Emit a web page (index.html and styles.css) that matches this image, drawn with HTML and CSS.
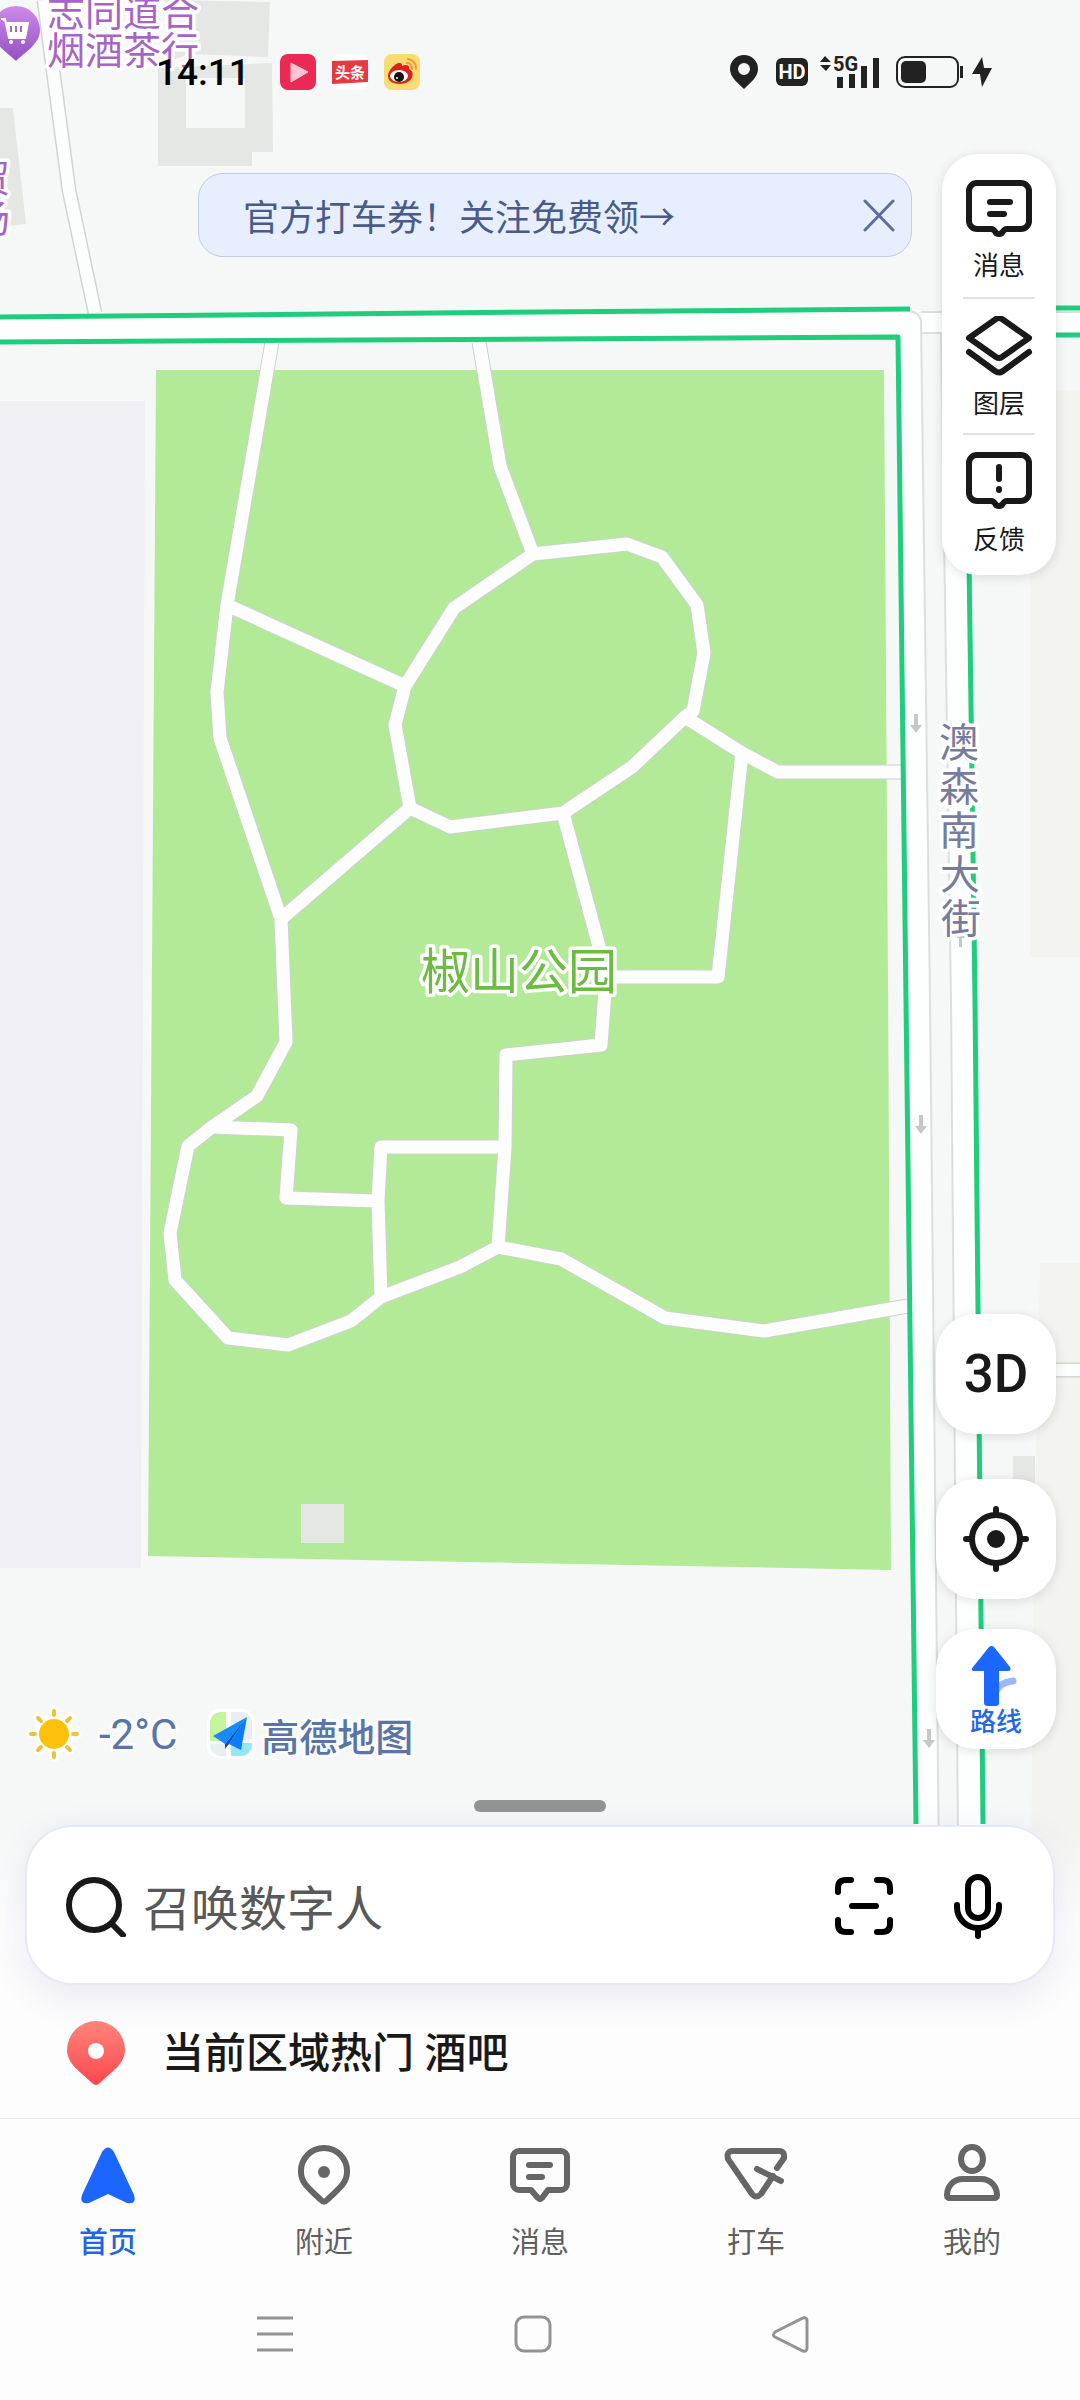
FILE: index.html
```html
<!DOCTYPE html>
<html lang="zh-CN">
<head>
    <meta charset="UTF-8">
    <meta name="viewport" content="width=device-width, initial-scale=1.0">
    <title>高德地图</title>
    <link rel="stylesheet" href="styles.css">
</head>
<body>
    <div class="app">
        <!-- 地图底图 -->
        <svg class="map" viewBox="0 0 1080 1960" aria-hidden="true">
            <defs>
                <linearGradient id="poi" x1="0" y1="0" x2="0" y2="1">
                    <stop offset="0" stop-color="#cf8ae8"/>
                    <stop offset="1" stop-color="#9350c4"/>
                </linearGradient>
                <g id="lanes">
                    <path d="M44 0L53 70L69 190L95 313"/>
                    <path d="M1040 1370H1080"/>
                </g>
                <g id="trails">
                    <path d="M272 342L227 605L217 692L220 738L281 919L286 1042L257 1096L212 1127L188 1146L170 1233L175 1280L228 1338L288 1345L351 1321L381 1297L460 1267L498 1247L561 1259L665 1318L764 1331L908 1306"/>
                    <path d="M479 342L500 466L533 554L627 544L662 557L697 605L704 653L693 711L685 717L632 767L563 813L450 827L410 808L395 725L405 686L454 608L533 554"/>
                    <path d="M227 605L405 686M410 808L281 919"/>
                    <path d="M685 717L742 753L778 772H902M742 753L718 977H604"/>
                    <path d="M563 813L600 950L606 977L601 1045L506 1055L505 1147L498 1247"/>
                    <path d="M212 1127L291 1130L286 1198L378 1201M505 1147H381L378 1201L381 1297"/>
                </g>
            </defs>
            <path class="land-mauve" d="M0 401H145L141 1568H0z"/>
            <path class="land-beige" d="M1030 390H1080V957H1030zM1040 1263H1080V1960H1030L1034 1560z"/>
            <path class="building" d="M165 0L270 2L268 57L190 54L165 62zM158 68L272 63L273 152H252V166H158zM0 108H13L26 224L0 227zM1013 1456H1035V1490H1013z"/>
            <path class="hole" d="M186 78H245V128H186z"/>
            <path class="park" d="M156 370H884L888 980L891 1570L148 1556z"/>
            <path class="building" d="M301 1504H344V1543H301z"/>

            <!-- 小路 -->
            <use href="#lanes" class="lane-case"/>
            <use href="#lanes" class="lane"/>
            <use href="#trails" class="trail-case"/>
            <use href="#trails" class="trail"/>

            <!-- 主干道 -->
            <path class="road" d="M0 315L910 310Q920 312 921 322L930 1000L940 1960H918L898 337L0 342z"/>
            <path class="road" d="M921 312H1080V333H966L983 1960H959L951 1000L941 333H921z"/>
            <path class="road-edge" d="M907 311Q920 311 921 322L930 1000L940 1960M921 312H1080M921 333H941L951 1000L959 1960"/>
            <path class="traffic" d="M0 317L540 312L910 309M0 342L898 337L906 1000L916 1824M1050 308H1080M1050 335H1080M966 340L975 1000L983 1824"/>
            <path class="arrow" d="M914 714h4v11h4l-6 8l-6-8h4zM919 1115h4v11h4l-6 8l-6-8h4zM927 1729h4v11h4l-6 8l-6-8h4zM957 935h8v3h-3v9h-3v-9h-2z"/>

            <!-- 地名 -->
            <path fill="url(#poi)" d="M16 6a24 24 0 0 1 24 24c0 14-15 22-24 31c-9-9-24-17-24-31a24 24 0 0 1 24-24z"/>
            <path class="cart" d="M1 19h4l4 19h16l3-15H6"/>
            <path class="cart-lines" d="M11 26v6M16 26v6M21 26v6"/>
            <circle cx="11" cy="42" r="2" fill="#fff"/>
            <circle cx="23" cy="42" r="2" fill="#fff"/>
            <g class="shop-name">
                <text x="47" y="26">志同道合</text>
                <text x="47" y="64">烟酒茶行</text>
                <text x="-28" y="192">贸</text>
                <text x="-28" y="232">场</text>
            </g>
            <text class="park-name" x="519" y="989">椒山公园</text>
            <g class="street-name">
                <text x="959" y="757">澳</text>
                <text x="959" y="801">森</text>
                <text x="959" y="845">南</text>
                <text x="960" y="889">大</text>
                <text x="961" y="933">街</text>
            </g>
        </svg>

        <header class="status">
            <div class="status-left">
                <time class="clock">14:11</time>
                <svg width="36" height="36" viewBox="0 0 36 36">
                    <rect width="36" height="36" rx="8" fill="#ea2a54"/>
                    <path d="M11 9l17 9l-17 10z" fill="#fbc6d0" stroke="#fbc6d0" stroke-linejoin="round"/>
                </svg>
                <svg width="36" height="36" viewBox="0 0 36 36">
                    <rect width="36" height="36" rx="8" fill="#fff"/>
                    <path d="M0 7L36 6V28L0 30z" fill="#e43b41"/>
                    <text x="18" y="24" class="toutiao">头条</text>
                </svg>
                <svg width="36" height="36" viewBox="0 0 36 36">
                    <rect width="36" height="36" rx="8" fill="#fbdc72"/>
                    <path d="M4 22c0-6 8-14 12-13c2 0 2 2 2 3c4-2 8-1 7 3c7 3 4 15-9 15c-7 0-12-3-12-8z" fill="#dd2219"/>
                    <ellipse cx="15" cy="22" rx="9" ry="6" fill="#fff"/>
                    <circle cx="15" cy="23" r="5" fill="#111"/>
                    <circle cx="13" cy="24" r="1" fill="#fff"/>
                    <path d="M24 5a9 9 0 0 1 8 10M23 9a5 5 0 0 1 5 6" fill="none" stroke="#f0993a" stroke-width="2" stroke-linecap="round"/>
                </svg>
            </div>
            <div class="status-right">
                <svg class="gap-pin" width="28" height="36" viewBox="0 0 28 36">
                    <path fill-rule="evenodd" d="M14 1a14 14 0 0 1 14 14c0 8-7 13-14 20C7 28 0 23 0 15A14 14 0 0 1 14 1zm0 8a6 6 0 1 0 0 12a6 6 0 0 0 0-12z"/>
                </svg>
                <svg class="gap-hd" width="32" height="28" viewBox="0 0 32 28">
                    <rect width="32" height="28" rx="6"/>
                    <text x="16" y="21" class="hd">HD</text>
                </svg>
                <svg class="gap-net" width="60" height="34" viewBox="0 0 60 34">
                    <path d="M0 7l5-6l6 6zM0 10h11l-5 6z"/>
                    <text x="13" y="16" class="net">5G</text>
                    <path d="M17 22h6v11h-6zM29 19h6v14h-6zM41 11h6v22h-6zM53 3h6v30h-6z"/>
                </svg>
                <svg width="68" height="32" viewBox="0 0 68 32">
                    <rect x="1" y="1" width="61" height="30" rx="8" fill="none" stroke="#222" stroke-width="2"/>
                    <rect x="5" y="5" width="25" height="22" rx="5"/>
                    <path d="M64 10h3v12h-3z"/>
                </svg>
                <svg width="20" height="32" viewBox="0 0 20 32">
                    <path d="M10 1L0 18h8l2 13L20 12h-8z"/>
                </svg>
            </div>
        </header>

        <main class="overlay">
            <div class="overlay-top">
                <div class="banner">
                    <a class="banner-link" href="#">官方打车券！关注免费领→</a>
                    <button class="banner-close" aria-label="关闭">
                        <svg width="34" height="34" viewBox="0 0 34 34"><path d="M3 3l28 29M31 3L3 32"/></svg>
                    </button>
                </div>
                <div class="tools">
                    <button class="tool">
                        <svg width="68" height="62" viewBox="0 0 68 62">
                            <path d="M12 5h44a8 8 0 0 1 8 8v30a8 8 0 0 1-8 8h-14q-3 0-5 4q-3 2-6 0q-2-4-5-4h-14a8 8 0 0 1-8-8v-30a8 8 0 0 1 8-8zM25 24h20M25 36h14"/>
                        </svg>
                        消息
                    </button>
                    <button class="tool">
                        <svg width="68" height="62" viewBox="0 0 68 62">
                            <path d="M4 22L31 3q3-2 6 0L64 22L37 41q-3 2-6 0zM4 36L30 55q4 3 8 0L64 36"/>
                        </svg>
                        图层
                    </button>
                    <button class="tool">
                        <svg width="68" height="62" viewBox="0 0 68 62">
                            <path d="M12 3h44a8 8 0 0 1 8 8v30a8 8 0 0 1-8 8h-14q-3 0-5 4q-3 2-6 0q-2-4-5-4h-14a8 8 0 0 1-8-8v-30a8 8 0 0 1 8-8zM34 15v12M34 37v1"/>
                        </svg>
                        反馈
                    </button>
                </div>
            </div>

            <div class="overlay-bottom">
                <div class="weather">
                    <svg class="sun" width="56" height="56" viewBox="0 0 56 56">
                        <g stroke-linecap="round">
                            <path d="M28 5v4M28 47v4M5 28h4M47 28h4M12 12l3 3M41 41l3 3M12 44l3-3M41 15l3-3" stroke="#fff" stroke-width="10"/>
                            <circle cx="28" cy="28" r="20" fill="#fff"/>
                            <path d="M28 5v4M28 47v4M5 28h4M47 28h4M12 12l3 3M41 41l3 3M12 44l3-3M41 15l3-3" stroke="#efc235" stroke-width="4"/>
                        </g>
                        <circle cx="28" cy="28" r="15" fill="#ffc107"/>
                    </svg>
                    <span class="temp">-2°C</span>
                    <svg class="logo" width="48" height="50" viewBox="0 0 48 50">
                        <rect width="48" height="50" rx="13" fill="#fff"/>
                        <path d="M14 3h5v29H3V14A11 11 0 0 1 14 3z" fill="#c3f59c"/>
                        <path d="M24 3h10a11 11 0 0 1 11 11v17H24zM3 35h16v12h-5A11 11 0 0 1 3 36z" fill="#e9eff0"/>
                        <path d="M24 34h21v2a11 11 0 0 1-11 11H24z" fill="#94e6fb"/>
                        <path d="M40 8L6 27l12 8z" fill="#148bff"/>
                        <path d="M40 8L22 35l12 6z" fill="#0c7cff"/>
                        <path d="M18 35v5l4-5L40 8z" fill="#0752c0"/>
                    </svg>
                    <span class="brand">高德地图</span>
                </div>
                <div class="controls">
                    <button class="control control-3d">3D</button>
                    <button class="control control-locate" aria-label="定位">
                        <svg width="68" height="68" viewBox="0 0 68 68" fill="none" stroke="#191919" stroke-width="6" stroke-linecap="round">
                            <circle cx="34" cy="34" r="24"/>
                            <circle cx="34" cy="34" r="9" fill="#191919" stroke="none"/>
                            <path d="M34 4v6M34 58v6M4 34h6M58 34h6"/>
                        </svg>
                    </button>
                    <button class="control control-route">
                        <svg width="52" height="60" viewBox="0 0 52 60">
                            <path d="M24 50c3-10 9-14 19-15" fill="none" stroke="#9db8f8" stroke-width="7" stroke-linecap="round"/>
                            <path d="M19 1q3-2 5 0L40 21q2 4-2 4h-9v32q0 3-3 3h-8q-4 0-4-3V25H5q-5 0-2-4z" fill="#1a68ff"/>
                        </svg>
                        路线
                    </button>
                </div>
            </div>
        </main>

        <section class="sheet">
            <div class="handle"></div>
            <form class="search">
                <label for="keyword">
                    <svg width="64" height="64" viewBox="0 0 64 64" fill="none" stroke="#191919" stroke-width="6" stroke-linecap="round">
                        <circle cx="29" cy="32" r="25"/>
                        <path d="M48 52l10 10"/>
                    </svg>
                </label>
                <input id="keyword" class="search-input" type="text" placeholder="召唤数字人" aria-label="搜索">
                <button class="search-button" type="button" aria-label="扫一扫">
                    <svg width="60" height="68" viewBox="0 0 60 68">
                        <path d="M17 9h-5q-8 0-8 8v4M43 9h5q8 0 8 8v4M17 61h-5q-8 0-8-8v-4M43 61h5q8 0 8-8v-4M18 35h24"/>
                    </svg>
                </button>
                <button class="search-button" type="button" aria-label="语音">
                    <svg width="60" height="68" viewBox="0 0 60 68">
                        <rect x="20" y="6" width="20" height="41" rx="10"/>
                        <path d="M9 34v2a21 21 0 0 0 42 0v-2M30 57v8"/>
                    </svg>
                </button>
            </form>
            <a class="hot" href="#">
                <svg width="60" height="66" viewBox="0 0 60 66">
                    <defs>
                        <linearGradient id="hot" x1="0" y1="0" x2="0" y2="1">
                            <stop offset="0" stop-color="#ff857b"/>
                            <stop offset="1" stop-color="#ff474f"/>
                        </linearGradient>
                    </defs>
                    <path fill="url(#hot)" d="M30 1a29 29 0 0 1 29 29c0 14-14 22-25 33q-4 4-8 0C15 52 1 44 1 30A29 29 0 0 1 30 1z"/>
                    <circle cx="30" cy="31" r="8" fill="#fff"/>
                </svg>
                <span class="hot-text">当前区域热门 酒吧</span>
            </a>
        </section>

        <nav class="tabs">
            <a class="tab tab-active" href="#">
                <svg width="64" height="64" viewBox="0 0 64 64">
                    <path d="M26 11q6-9 12 0L58 54q3 10-7 8L32 53L13 62q-10 2-7-8z" fill="#1a66ff" stroke="none"/>
                </svg>
                首页
            </a>
            <a class="tab" href="#">
                <svg width="64" height="64" viewBox="0 0 64 64">
                    <path d="M32 7a23 23 0 0 1 23 24c0 12-10 18-20 28q-3 3-6 0C19 49 9 43 9 31A23 23 0 0 1 32 7z"/>
                    <circle cx="32" cy="31" r="6" fill="#666" stroke="none"/>
                </svg>
                附近
            </a>
            <a class="tab" href="#">
                <svg width="64" height="64" viewBox="0 0 64 64">
                    <path d="M11 10h42a6 6 0 0 1 6 6v27a6 6 0 0 1-6 6H40l-6 8q-2 2-4 0l-7-8H11a6 6 0 0 1-6-6V16a6 6 0 0 1 6-6zM21 24h21M21 36h13"/>
                </svg>
                消息
            </a>
            <a class="tab" href="#">
                <svg width="64" height="64" viewBox="0 0 64 64">
                    <path d="M53 27l7-10q1-7-5-7H9q-7 0-5 8l24 35q4 5 9 0l12-18M33 28l24 12"/>
                </svg>
                打车
            </a>
            <a class="tab" href="#">
                <svg width="64" height="64" viewBox="0 0 64 64">
                    <ellipse cx="32" cy="18" rx="11" ry="12"/>
                    <path d="M23 38h18c10 0 16 8 16 16q0 3-3 3H10q-3 0-3-3c0-8 6-16 16-16z"/>
                </svg>
                我的
            </a>
        </nav>

        <div class="system">
            <button class="system-button" aria-label="最近任务">
                <svg width="38" height="38" viewBox="0 0 38 38"><path d="M1 3h36M1 19h36M1 35h36"/></svg>
            </button>
            <button class="system-button" aria-label="主屏幕">
                <svg width="38" height="38" viewBox="0 0 38 38"><rect x="2" y="2" width="34" height="34" rx="8"/></svg>
            </button>
            <button class="system-button" aria-label="返回">
                <svg width="38" height="38" viewBox="0 0 38 38"><path d="M3 17L31 3q4-1 4 3v27q0 4-4 3L3 22q-3-2 0-5z"/></svg>
            </button>
        </div>
    </div>
</body>
</html>
```
FILE: styles.css
```css
* {
    box-sizing: border-box;
}

body {
    margin: 0;
    font-family: Roboto, "Noto Sans CJK SC", sans-serif;
    color: #191919;
    background: #fdfdfd;
}

button {
    padding: 0;
    border: none;
    background: none;
    color: inherit;
    font-family: inherit;
    cursor: pointer;
}

a {
    color: inherit;
    text-decoration: none;
}

svg {
    display: block;
    flex: none;
}

.app {
    position: relative;
    display: flex;
    flex-direction: column;
    min-height: 100vh;
    overflow: hidden;
}

/* 地图 */
.map {
    position: absolute;
    top: 0;
    left: 0;
    width: 100%;
    height: auto;
    background: #f5f8f7;
}

.land-mauve { fill: #f1eff6; }
.land-beige { fill: #f3f4f0; }
.building { fill: #e5e7e4; }
.hole { fill: #f5f8f7; }
.park { fill: #b2ea98; }
.road { fill: #fdfefe; }
.arrow { fill: #c6c8c8; }

.lane,
.lane-case,
.trail,
.trail-case,
.road-edge,
.traffic {
    fill: none;
    stroke-linejoin: round;
}

.lane { stroke: #fcfdfd; stroke-width: 12; }
.lane-case { stroke: #d2d4d4; stroke-width: 15; }
.trail { stroke: #fcfdfc; stroke-width: 13; }
.trail-case { stroke: #cdd2cd; stroke-width: 15; }
.road-edge { stroke: #dcdfdf; stroke-width: 2; }
.traffic { stroke: #1fcd7c; stroke-width: 5; }

.cart {
    fill: #fff;
    stroke: #fff;
    stroke-width: 2;
}

.cart-lines {
    stroke: #a765cf;
    stroke-width: 2;
}

.shop-name,
.park-name,
.street-name {
    paint-order: stroke;
    stroke: #fff;
    stroke-width: 7;
    stroke-linejoin: round;
}

.shop-name {
    font-size: 38px;
    fill: #a664c9;
}

.park-name {
    font-size: 49px;
    text-anchor: middle;
    fill: #6cbb42;
}

.street-name {
    font-size: 40px;
    text-anchor: middle;
    fill: #777b9c;
}

/* 状态栏 */
.status {
    position: relative;
    display: flex;
    justify-content: space-between;
    align-items: center;
    height: 144px;
    padding: 0 88px 0 156px;
}

.status-left,
.status-right {
    display: flex;
    align-items: center;
}

.status-left {
    gap: 16px;
}

.status-right {
    gap: 8px;
    fill: #222;
}

.clock {
    margin-right: 14px;
    font-size: 37px;
    font-weight: 500;
    color: #000;
}

.gap-pin { margin-right: 10px; }
.gap-hd { margin-right: 4px; }
.gap-net { margin-right: 8px; }

.toutiao {
    font-size: 15px;
    font-weight: 700;
    text-anchor: middle;
    fill: #fff;
}

.hd {
    font-size: 20px;
    font-weight: 700;
    text-anchor: middle;
    fill: #fff;
}

.net {
    font-size: 20px;
    font-weight: 700;
}

/* 地图上的控件 */
.overlay {
    position: relative;
    flex: 1;
    display: flex;
    flex-direction: column;
    justify-content: space-between;
    padding: 10px 24px 29px;
}

.overlay-top {
    display: flex;
    justify-content: space-between;
    align-items: flex-start;
    gap: 30px;
    padding-left: 174px;
}

.banner {
    flex: 1;
    display: flex;
    justify-content: space-between;
    align-items: center;
    height: 84px;
    margin-top: 19px;
    padding: 0 15px 0 44px;
    border: 1px solid #c3cce4;
    border-radius: 25px;
    background: #e7effe;
}

.banner-link {
    font-size: 36px;
    color: #4a5b88;
}

.banner-close {
    fill: none;
    stroke: #5d6e9b;
    stroke-width: 3;
    stroke-linecap: round;
}

.tools {
    width: 114px;
    padding: 7px 21px 6px;
    border-radius: 36px;
    background: #fff;
    box-shadow: 0 2px 12px rgba(0, 0, 0, 0.12);
}

.tool {
    display: flex;
    flex-direction: column;
    align-items: center;
    gap: 8px;
    width: 100%;
    height: 136px;
    padding-top: 17px;
    font-size: 26px;
    line-height: 36px;
}

.tool + .tool {
    border-top: 2px solid #e2e2e2;
}

.tool svg {
    fill: none;
    stroke: #191919;
    stroke-width: 6;
    stroke-linecap: round;
    stroke-linejoin: round;
}

.overlay-bottom {
    display: flex;
    justify-content: space-between;
    align-items: flex-end;
}

.weather {
    display: flex;
    align-items: center;
    height: 50px;
    padding-left: 2px;
    color: #5a74a6;
}

.temp {
    margin: 0 30px 0 17px;
    font-size: 42px;
}

.brand {
    margin-left: 6px;
    font-size: 38px;
    font-weight: 500;
}

.temp,
.brand {
    -webkit-text-stroke: 6px #fafbfb;
    paint-order: stroke;
}

.controls {
    display: flex;
    flex-direction: column;
    padding-bottom: 10px;
}

.control {
    display: flex;
    flex-direction: column;
    justify-content: center;
    align-items: center;
    width: 120px;
    height: 120px;
    border-radius: 40px;
    background: #fff;
    box-shadow: 0 2px 12px rgba(0, 0, 0, 0.12);
}

.control-3d {
    margin-bottom: 45px;
    font-size: 53px;
    font-weight: 500;
}

.control-locate {
    margin-bottom: 30px;
}

.control-route {
    padding-top: 5px;
    font-size: 26px;
    font-weight: 500;
    line-height: 32px;
    color: #2468e6;
}

/* 底部面板 */
.sheet {
    position: relative;
    padding: 12px 25px 0;
    background: linear-gradient(rgba(253, 253, 253, 0) 40px, #fdfdfd 130px);
}

.handle {
    width: 132px;
    height: 12px;
    margin: 0 auto 13px;
    border-radius: 6px;
    background: #929593;
}

.search {
    display: flex;
    align-items: center;
    gap: 14px;
    height: 160px;
    padding: 0 45px 0 38px;
    border: 2px solid #e9e9f4;
    border-radius: 48px;
    background: #fff;
    box-shadow: 0 12px 36px rgba(80, 80, 180, 0.12);
}

.search-input {
    flex: 1;
    min-width: 0;
    padding: 8px 0 0;
    border: none;
    outline: none;
    background: none;
    font-family: inherit;
    font-size: 48px;
    color: #191919;
}

.search-input::placeholder {
    color: #595959;
    opacity: 1;
}

.search-button {
    fill: none;
    stroke: #000;
    stroke-width: 6;
    stroke-linecap: round;
}

.search-button + .search-button {
    margin-left: 40px;
}

.hot {
    display: flex;
    align-items: center;
    gap: 36px;
    height: 133px;
    padding: 2px 0 0 41px;
    font-size: 42px;
    font-weight: 500;
}

.hot-text {
    padding-bottom: 6px;
}

.tabs {
    position: relative;
    display: grid;
    grid-template-columns: repeat(5, 1fr);
    height: 150px;
    padding-top: 22px;
    border-top: 1px solid #eaeaea;
    background: #fdfdfd;
}

.tab {
    display: flex;
    flex-direction: column;
    align-items: center;
    gap: 20px;
    font-size: 29px;
    line-height: 36px;
    color: #5f5f5f;
}

.tab svg {
    fill: none;
    stroke: #666;
    stroke-width: 6;
    stroke-linecap: round;
    stroke-linejoin: round;
}

.tab-active {
    font-weight: 500;
    color: #1f66e5;
}

.system {
    position: relative;
    display: flex;
    justify-content: center;
    align-items: center;
    gap: 220px;
    height: 132px;
    padding-right: 14px;
    background: #fdfdfd;
}

.system-button {
    fill: none;
    stroke: #939393;
    stroke-width: 3;
}
```
